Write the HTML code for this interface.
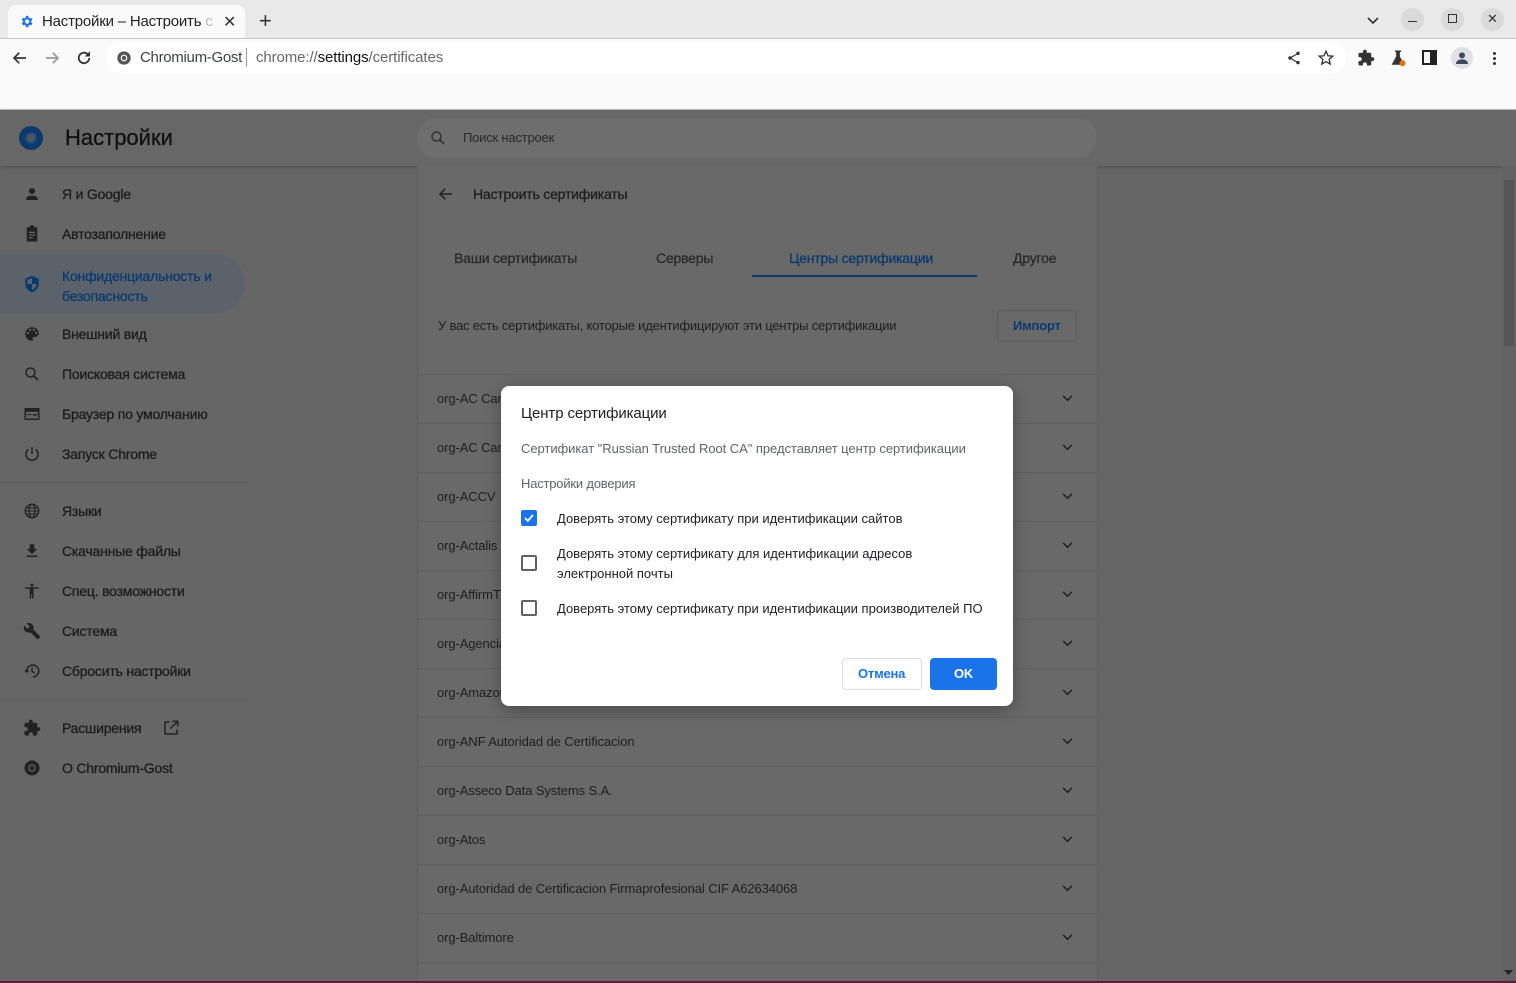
<!DOCTYPE html>
<html><head><meta charset="utf-8">
<style>
*{box-sizing:border-box;margin:0;padding:0}
html{width:1516px;height:983px;overflow:hidden;background:#666}
body{width:1516px;height:983px;overflow:hidden;background:#666;font-family:"Liberation Sans","Noto Sans CJK SC",sans-serif;position:relative;color:#222}
.abs{position:absolute}
.tabstrip{left:0;top:0;width:1516px;height:38px;background:#e9e9e9}
.tab{left:8px;top:5px;width:237px;height:34px;background:#fafafa;border-radius:8px 8px 0 0}
.toolbar{left:0;top:38px;width:1516px;height:72px;background:#fafafa;border-top:1px solid #c6c6c6;border-bottom:1px solid #bdbdbd}
.omni{left:106px;top:42px;width:1240px;height:31px;background:#fff;border-radius:16px}
.t{position:absolute;white-space:nowrap;font-size:14px;letter-spacing:-0.2px}
.side .t{color:#1c1c1c;-webkit-text-stroke:0.3px #1c1c1c}
.ic{position:absolute;width:18px;height:18px}
.sep{position:absolute;height:1px;background:#5e5e5e}
.card{left:417px;top:166px;width:681px;height:817px;background:#696969;border-left:1px solid #5f5f5f;border-right:1px solid #5f5f5f;overflow:hidden}
.row{position:absolute;left:0;width:679px;height:49px;border-top:1px solid #5e5e5e}
.row span{position:absolute;left:19px;top:16px;font-size:13px;color:#1e1e1e;letter-spacing:-0.1px}
.row svg{position:absolute;right:24px;top:20px}
.dlg{left:501px;top:386px;width:512px;height:320px;background:#fff;border-radius:8px;box-shadow:0 4px 16px rgba(0,0,0,.3)}
.cb{position:absolute;left:20px;width:16px;height:16px;border:2px solid #5f6368;border-radius:2px}
.med{-webkit-text-stroke:0.3px currentColor}
</style></head><body>
<div class="abs tabstrip"></div>
<div class="abs tab"></div>
<svg class="abs" style="left:19px;top:14px" width="15" height="15" viewBox="0 0 24 24"><path fill="#1a73e8" d="M19.4 13a7.5 7.5 0 000-2l2.1-1.6-2-3.5-2.5 1a7 7 0 00-1.7-1L15 3h-4l-.4 2.9a7 7 0 00-1.7 1l-2.5-1-2 3.5L6.6 11a7.5 7.5 0 000 2l-2.1 1.6 2 3.5 2.5-1a7 7 0 001.7 1L11 21h4l.4-2.9a7 7 0 001.7-1l2.5 1 2-3.5zM13 15.5a3.5 3.5 0 110-7 3.5 3.5 0 010 7z"/></svg>
<div class="t" style="left:42px;top:13px;font-size:15px;color:#222">Настройки – Настроить <span style="color:#bbb">с</span></div>
<div class="t" style="left:223px;top:12px;font-size:16px;color:#333">✕</div>
<div class="t" style="left:259px;top:8px;font-size:22px;color:#333">+</div>
<svg class="abs" style="left:1366px;top:16px" width="14" height="10" viewBox="0 0 14 10"><path d="M2 2l5 5 5-5" stroke="#333" stroke-width="1.6" fill="none"/></svg>
<div class="abs" style="left:1401px;top:8px;width:23px;height:23px;border-radius:50%;background:#dadada"></div>
<div class="abs" style="left:1408px;top:21px;width:9px;height:1px;background:#333"></div>
<div class="abs" style="left:1441px;top:8px;width:23px;height:23px;border-radius:50%;background:#dadada"></div>
<div class="abs" style="left:1448px;top:14px;width:9px;height:9px;border:1.3px solid #333"></div>
<div class="abs" style="left:1481px;top:8px;width:23px;height:23px;border-radius:50%;background:#dadada"></div>
<div class="t" style="left:1487px;top:11px;font-size:13px;color:#333">✕</div>

<div class="abs toolbar"></div>
<div class="abs omni"></div>
<svg class="abs" style="left:11px;top:49px" width="18" height="18" viewBox="0 0 24 24"><path d="M20 12H5M11 5l-7 7 7 7" stroke="#333" stroke-width="2.2" fill="none"/></svg>
<svg class="abs" style="left:43px;top:49px" width="18" height="18" viewBox="0 0 24 24"><path d="M4 12h15M13 5l7 7-7 7" stroke="#999" stroke-width="2.2" fill="none"/></svg>
<svg class="abs" style="left:75px;top:49px" width="18" height="18" viewBox="0 0 24 24"><path d="M19 12a7 7 0 11-2-5" stroke="#333" stroke-width="2.4" fill="none"/><path d="M20 3v7h-7z" fill="#333"/></svg>
<svg class="abs" style="left:116px;top:50px" width="16" height="16" viewBox="0 0 24 24"><circle cx="12" cy="12" r="10" fill="#555"/><circle cx="12" cy="12" r="5" fill="#fff"/><circle cx="12" cy="12" r="3.3" fill="#555"/></svg>
<div class="t" style="left:140px;top:49px;font-size:15px;color:#3c4043;letter-spacing:-0.3px">Chromium-Gost</div>
<div class="abs" style="left:246px;top:48px;width:1px;height:19px;background:#999"></div>
<div class="t" style="left:256px;top:49px;font-size:15px;color:#666;letter-spacing:-0.1px">chrome://<span style="color:#111">settings</span>/certificates</div>
<svg class="abs" style="left:1286px;top:50px" width="16" height="16" viewBox="0 0 24 24"><circle cx="18" cy="5" r="2.6" fill="#333"/><circle cx="6" cy="12" r="2.6" fill="#333"/><circle cx="18" cy="19" r="2.6" fill="#333"/><path d="M18 5L6 12l12 7" stroke="#333" stroke-width="1.8" fill="none"/></svg>
<svg class="abs" style="left:1317px;top:49px" width="18" height="18" viewBox="0 0 24 24"><path d="M12 3l2.7 6 6.3.6-4.8 4.2 1.4 6.3L12 16.8 6.4 20.1l1.4-6.3L3 9.6 9.3 9z" stroke="#333" stroke-width="1.8" fill="none"/></svg>
<svg class="abs" style="left:1357px;top:49px" width="18" height="18" viewBox="0 0 24 24"><path fill="#333" d="M20.5 11H19V7a2 2 0 00-2-2h-4V3.5a2.5 2.5 0 00-5 0V5H4a2 2 0 00-2 2v3.8h1.5a2.7 2.7 0 010 5.4H2V20a2 2 0 002 2h3.8v-1.5a2.7 2.7 0 015.4 0V22H17a2 2 0 002-2v-4h1.5a2.5 2.5 0 000-5z"/></svg>
<svg class="abs" style="left:1389px;top:49px" width="18" height="18" viewBox="0 0 24 24"><path fill="#333" d="M8 2h8v2h-1.5v6l6 11H3.5l6-11V4H8z"/><circle cx="18" cy="19" r="4" fill="#e8710a"/></svg>
<div class="abs" style="left:1422px;top:50px;width:15px;height:15px;border:2.5px solid #222;border-right-width:7px"></div>
<div class="abs" style="left:1451px;top:47px;width:22px;height:22px;border-radius:50%;background:#dfe1e5"></div>
<svg class="abs" style="left:1454px;top:50px" width="16" height="16" viewBox="0 0 24 24"><circle cx="12" cy="8" r="4.5" fill="#3c4a5c"/><path d="M3 21c0-5 4-7 9-7s9 2 9 7z" fill="#3c4a5c"/></svg>
<div class="abs" style="left:1493px;top:52px;width:3px;height:3px;border-radius:50%;background:#333"></div>
<div class="abs" style="left:1493px;top:57px;width:3px;height:3px;border-radius:50%;background:#333"></div>
<div class="abs" style="left:1493px;top:62px;width:3px;height:3px;border-radius:50%;background:#333"></div>

<!-- settings header -->
<div class="abs" style="left:0;top:110px;width:1516px;height:56px;background:#676767;box-shadow:0 1px 3px rgba(0,0,0,.25)"></div>
<div class="abs" style="left:19px;top:126px;width:24px;height:24px;border-radius:50%;background:#0d3a6b"></div>
<div class="abs" style="left:25px;top:132px;width:12px;height:12px;border-radius:50%;background:#555;border:2px solid #1a4b85"></div>
<div class="t med" style="left:65px;top:125px;font-size:22px;color:#111;letter-spacing:0">Настройки</div>
<div class="abs" style="left:417px;top:118px;width:680px;height:40px;background:#6e6e6e;border-radius:20px"></div>
<svg class="abs" style="left:429px;top:129px" width="18" height="18" viewBox="0 0 24 24"><circle cx="10" cy="10" r="6" stroke="#333" stroke-width="2" fill="none"/><path d="M14.5 14.5L20 20" stroke="#333" stroke-width="2.2"/></svg>
<div class="t" style="left:463px;top:130px;font-size:13px;color:#2a2a2a">Поиск настроек</div>

<!-- sidebar -->
<div class="side">
<div class="abs" style="left:0;top:254px;width:245px;height:59px;background:#5b626b;border-radius:0 30px 30px 0"></div>
<svg class="ic" style="left:23px;top:185px" viewBox="0 0 24 24"><circle cx="12" cy="8" r="4" fill="#222"/><path d="M4 20c0-4 4-6 8-6s8 2 8 6z" fill="#222"/></svg>
<div class="t" style="left:62px;top:186px">Я и Google</div>
<svg class="ic" style="left:23px;top:225px" viewBox="0 0 24 24"><path fill="#222" d="M19 3h-4a3 3 0 00-6 0H5v19h14zM8 9h8v1.6H8zm0 3.5h8v1.6H8zm0 3.5h5v1.6H8z"/></svg>
<div class="t" style="left:62px;top:226px">Автозаполнение</div>
<svg class="ic" style="left:23px;top:275px" viewBox="0 0 24 24"><path fill="#0b3a6e" d="M12 1L3 5v6c0 5.5 3.8 10.7 9 12 5.2-1.3 9-6.5 9-12V5z"/><path fill="#5b626b" d="M12 4v8H6V6.5zM12 12h6c-.5 4-3 7-6 8z"/></svg>
<div class="t" style="left:62px;top:266px;color:#0b3a6e;-webkit-text-stroke:0.3px #0b3a6e;line-height:20px">Конфиденциальность и<br>безопасность</div>
<svg class="ic" style="left:23px;top:325px" viewBox="0 0 24 24"><path fill="#222" d="M12 3a9 9 0 000 18c1 0 1.5-.7 1.5-1.5 0-.4-.2-.7-.4-1-.2-.3-.4-.6-.4-1 0-.8.7-1.5 1.5-1.5H16a5 5 0 005-5c0-4.4-4-8-9-8zM6.5 12a1.5 1.5 0 110-3 1.5 1.5 0 010 3zm3-4a1.5 1.5 0 110-3 1.5 1.5 0 010 3zm5 0a1.5 1.5 0 110-3 1.5 1.5 0 010 3zm3 4a1.5 1.5 0 110-3 1.5 1.5 0 010 3z"/></svg>
<div class="t" style="left:62px;top:326px">Внешний вид</div>
<svg class="ic" style="left:23px;top:365px" viewBox="0 0 24 24"><circle cx="10" cy="10" r="6" stroke="#222" stroke-width="2" fill="none"/><path d="M14.5 14.5L20 20" stroke="#222" stroke-width="2.2"/></svg>
<div class="t" style="left:62px;top:366px">Поисковая система</div>
<svg class="ic" style="left:23px;top:405px" viewBox="0 0 24 24"><path fill="none" stroke="#222" stroke-width="2" d="M3 5h18v14H3z"/><path fill="#222" d="M3 5h18v4H3zM13 12h6v2h-6zM5 12h6v1.5H5z"/></svg>
<div class="t" style="left:62px;top:406px">Браузер по умолчанию</div>
<svg class="ic" style="left:23px;top:445px" viewBox="0 0 24 24"><path d="M12 3v9" stroke="#222" stroke-width="2"/><path d="M7 6a8 8 0 1010 0" stroke="#222" stroke-width="2" fill="none"/></svg>
<div class="t" style="left:62px;top:446px">Запуск Chrome</div>
<div class="sep" style="left:0;top:482px;width:248px"></div>
<svg class="ic" style="left:23px;top:502px" viewBox="0 0 24 24"><circle cx="12" cy="12" r="9" stroke="#222" stroke-width="1.8" fill="none"/><ellipse cx="12" cy="12" rx="4" ry="9" stroke="#222" stroke-width="1.6" fill="none"/><path d="M3 12h18M4.5 8h15M4.5 16h15" stroke="#222" stroke-width="1.4"/></svg>
<div class="t" style="left:62px;top:503px">Языки</div>
<svg class="ic" style="left:23px;top:542px" viewBox="0 0 24 24"><path fill="#222" d="M19 9h-4V3H9v6H5l7 7zM5 18v2h14v-2z"/></svg>
<div class="t" style="left:62px;top:543px">Скачанные файлы</div>
<svg class="ic" style="left:23px;top:582px" viewBox="0 0 24 24"><circle cx="12" cy="4" r="2" fill="#222"/><path fill="#222" d="M21 9H3V7h18zM14 9v13h-2v-6h-1v6H9V9z"/></svg>
<div class="t" style="left:62px;top:583px">Спец. возможности</div>
<svg class="ic" style="left:23px;top:622px" viewBox="0 0 24 24"><path fill="#222" d="M22.7 19l-9.1-9.1c.9-2.3.4-5-1.5-6.9-2-2-5-2.4-7.4-1.3L9 6 6 9 1.6 4.7C.4 7.1.9 10.1 2.9 12.1c1.9 1.9 4.6 2.4 6.9 1.5l9.1 9.1c.4.4 1 .4 1.4 0l2.3-2.3c.5-.4.5-1.1.1-1.4z"/></svg>
<div class="t" style="left:62px;top:623px">Система</div>
<svg class="ic" style="left:23px;top:662px" viewBox="0 0 24 24"><path d="M5 12a8 8 0 118 8" stroke="#222" stroke-width="2" fill="none"/><path d="M1.5 11h7L5 15z" fill="#222"/><path d="M12 7v5.5l3.5 2" stroke="#222" stroke-width="1.8" fill="none"/></svg>
<div class="t" style="left:62px;top:663px">Сбросить настройки</div>
<div class="sep" style="left:0;top:699px;width:248px"></div>
<svg class="ic" style="left:23px;top:719px" viewBox="0 0 24 24"><path fill="#222" d="M20.5 11H19V7a2 2 0 00-2-2h-4V3.5a2.5 2.5 0 00-5 0V5H4a2 2 0 00-2 2v3.8h1.5a2.7 2.7 0 010 5.4H2V20a2 2 0 002 2h3.8v-1.5a2.7 2.7 0 015.4 0V22H17a2 2 0 002-2v-4h1.5a2.5 2.5 0 000-5z"/></svg>
<div class="t" style="left:62px;top:720px">Расширения</div>
<svg class="ic" style="left:162px;top:719px" viewBox="0 0 24 24"><path d="M10 4H4v16h16v-6" stroke="#222" stroke-width="2" fill="none"/><path d="M14 3h7v7M21 3l-10 10" stroke="#222" stroke-width="2" fill="none"/></svg>
<svg class="ic" style="left:23px;top:759px" viewBox="0 0 24 24"><circle cx="12" cy="12" r="10" fill="#222"/><circle cx="12" cy="12" r="5" fill="#666"/><circle cx="12" cy="12" r="3.3" fill="#222"/></svg>
<div class="t" style="left:62px;top:760px">О Chromium-Gost</div>
</div>

<!-- main card -->
<div class="abs card">
<svg class="abs" style="left:19px;top:19px" width="18" height="18" viewBox="0 0 24 24"><path d="M20 12H5M11 5l-7 7 7 7" stroke="#222" stroke-width="2" fill="none"/></svg>
<div class="t med" style="left:55px;top:20px;color:#1e1e1e">Настроить сертификаты</div>
<div class="t med" style="left:36px;top:84px;color:#2a2a2a">Ваши сертификаты</div>
<div class="t med" style="left:238px;top:84px;color:#2a2a2a">Серверы</div>
<div class="t med" style="left:371px;top:84px;color:#0b3a6e">Центры сертификации</div>
<div class="abs" style="left:334px;top:109px;width:225px;height:2px;background:#0b3a6e"></div>
<div class="t med" style="left:595px;top:84px;color:#2a2a2a">Другое</div>
<div class="t" style="left:20px;top:152px;font-size:13px;color:#1e1e1e;letter-spacing:-0.2px">У вас есть сертификаты, которые идентифицируют эти центры сертификации</div>
<div class="abs" style="left:579px;top:144px;width:80px;height:32px;border:1px solid #5c5c5c;border-radius:4px"></div>
<div class="t" style="left:595px;top:152px;font-size:13px;color:#0b3a6e;font-weight:bold">Импорт</div>
<div class="row" style="top:208px"><span>org-AC Camerfirma S.A.</span><svg width="11" height="7" viewBox="0 0 12 8"><path d="M1 1l5 5 5-5" stroke="#222" stroke-width="1.8" fill="none"/></svg></div>
<div class="row" style="top:257px"><span>org-AC Camerfirma SA CIF</span><svg width="11" height="7" viewBox="0 0 12 8"><path d="M1 1l5 5 5-5" stroke="#222" stroke-width="1.8" fill="none"/></svg></div>
<div class="row" style="top:306px"><span>org-ACCV</span><svg width="11" height="7" viewBox="0 0 12 8"><path d="M1 1l5 5 5-5" stroke="#222" stroke-width="1.8" fill="none"/></svg></div>
<div class="row" style="top:355px"><span>org-Actalis S.p.A.</span><svg width="11" height="7" viewBox="0 0 12 8"><path d="M1 1l5 5 5-5" stroke="#222" stroke-width="1.8" fill="none"/></svg></div>
<div class="row" style="top:404px"><span>org-AffirmTrust</span><svg width="11" height="7" viewBox="0 0 12 8"><path d="M1 1l5 5 5-5" stroke="#222" stroke-width="1.8" fill="none"/></svg></div>
<div class="row" style="top:453px"><span>org-Agencia Catalana</span><svg width="11" height="7" viewBox="0 0 12 8"><path d="M1 1l5 5 5-5" stroke="#222" stroke-width="1.8" fill="none"/></svg></div>
<div class="row" style="top:502px"><span>org-Amazon</span><svg width="11" height="7" viewBox="0 0 12 8"><path d="M1 1l5 5 5-5" stroke="#222" stroke-width="1.8" fill="none"/></svg></div>
<div class="row" style="top:551px"><span>org-ANF Autoridad de Certificacion</span><svg width="11" height="7" viewBox="0 0 12 8"><path d="M1 1l5 5 5-5" stroke="#222" stroke-width="1.8" fill="none"/></svg></div>
<div class="row" style="top:600px"><span>org-Asseco Data Systems S.A.</span><svg width="11" height="7" viewBox="0 0 12 8"><path d="M1 1l5 5 5-5" stroke="#222" stroke-width="1.8" fill="none"/></svg></div>
<div class="row" style="top:649px"><span>org-Atos</span><svg width="11" height="7" viewBox="0 0 12 8"><path d="M1 1l5 5 5-5" stroke="#222" stroke-width="1.8" fill="none"/></svg></div>
<div class="row" style="top:698px"><span>org-Autoridad de Certificacion Firmaprofesional CIF A62634068</span><svg width="11" height="7" viewBox="0 0 12 8"><path d="M1 1l5 5 5-5" stroke="#222" stroke-width="1.8" fill="none"/></svg></div>
<div class="row" style="top:747px"><span>org-Baltimore</span><svg width="11" height="7" viewBox="0 0 12 8"><path d="M1 1l5 5 5-5" stroke="#222" stroke-width="1.8" fill="none"/></svg></div>
<div class="row" style="top:796px"></div>
</div>

<!-- scrollbar -->
<div class="abs" style="left:1501px;top:166px;width:15px;height:817px;background:#636363"></div>
<div class="abs" style="left:1504px;top:180px;width:10px;height:166px;background:#555;border-radius:1px"></div>
<svg class="abs" style="left:1504px;top:970px" width="9" height="6" viewBox="0 0 9 6"><path d="M0 0h9L4.5 5z" fill="#222"/></svg>
<div class="abs" style="left:0;top:981px;width:1516px;height:2px;background:#5a1e3a"></div>

<!-- dialog -->
<div class="abs dlg">
<div class="t" style="left:20px;top:19px;font-size:15px;color:#202124;letter-spacing:-0.1px">Центр сертификации</div>
<div class="t" style="left:20px;top:55px;font-size:13px;color:#5f6368;letter-spacing:-0.05px">Сертификат "Russian Trusted Root CA" представляет центр сертификации</div>
<div class="t" style="left:20px;top:90px;font-size:13px;color:#5f6368">Настройки доверия</div>
<div class="cb" style="top:124px;background:#1a73e8;border-color:#1a73e8"><svg width="12" height="12" viewBox="0 0 12 12" style="position:absolute;left:0;top:0"><path d="M2 6l2.8 2.8L10 3" stroke="#fff" stroke-width="1.8" fill="none"/></svg></div>
<div class="t" style="left:56px;top:125px;font-size:13px;color:#202124;letter-spacing:0">Доверять этому сертификату при идентификации сайтов</div>
<div class="cb" style="top:169px"></div>
<div class="t" style="left:56px;top:158px;font-size:13px;color:#202124;line-height:20px;letter-spacing:0">Доверять этому сертификату для идентификации адресов<br>электронной почты</div>
<div class="cb" style="top:214px"></div>
<div class="t" style="left:56px;top:215px;font-size:13px;color:#202124;letter-spacing:0">Доверять этому сертификату при идентификации производителей ПО</div>
<div class="abs" style="left:341px;top:272px;width:80px;height:32px;border:1px solid #dadce0;border-radius:4px"></div>
<div class="t" style="left:357px;top:280px;font-size:13px;color:#1a73e8;font-weight:bold">Отмена</div>
<div class="abs" style="left:429px;top:272px;width:67px;height:32px;background:#1a73e8;border-radius:4px"></div>
<div class="t" style="left:453px;top:280px;font-size:13px;color:#fff;font-weight:bold">OK</div>
</div>
</body></html>
